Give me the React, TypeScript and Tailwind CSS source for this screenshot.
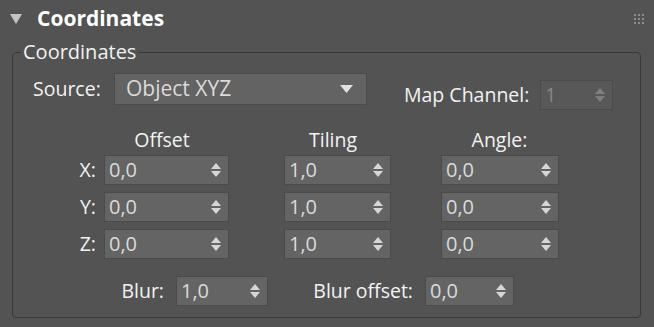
import React from 'react'

function Arrows({ dim }: { dim?: boolean }) {
  return (
    <svg width="10" height="14" viewBox="0 0 10 14" className="shrink-0">
      <polygon points="0,6 5,0 10,6" fill={dim ? '#7e7e7e' : '#d6d6d6'} />
      <polygon points="0,8 10,8 5,14" fill={dim ? '#7e7e7e' : '#d6d6d6'} />
    </svg>
  )
}

function Spinner({ value, className = '', dim }: { value: string; className?: string; dim?: boolean }) {
  return (
    <div
      className={`h-[30px] flex items-center justify-between pl-[4px] pr-[7px] border border-[#4b4b4b] text-[20px] ${
        dim ? 'bg-[#585858] text-[#878787]' : 'bg-[#646464] text-[#dadada]'
      } ${className}`}
    >
      <span className="leading-none">{value}</span>
      <Arrows dim={dim} />
    </div>
  )
}

const rows = [
  { axis: 'X:', offset: '0,0', tiling: '1,0', angle: '0,0' },
  { axis: 'Y:', offset: '0,0', tiling: '1,0', angle: '0,0' },
  { axis: 'Z:', offset: '0,0', tiling: '1,0', angle: '0,0' },
]

export default function App() {
  return (
    <div className="w-[654px] h-[327px] bg-[#535353] overflow-hidden text-[#f2f2f2] font-['Open_Sans',sans-serif] text-[19.5px]">
      {/* rollout header */}
      <div className="h-[38px] flex items-center relative">
        <svg width="12" height="10" viewBox="0 0 12 10" className="ml-[10px]">
          <polygon points="0,0 12,0 6,10" fill="#c4c4c4" />
        </svg>
        <span className="ml-[15px] font-bold text-[21px] text-white">Coordinates</span>
        <div className="absolute right-[10px] top-[14px] grid grid-cols-3 gap-[2px]">
          {Array.from({ length: 9 }).map((_, i) => (
            <div key={i} className="w-[2px] h-[2px] bg-[#8c8c8c]" />
          ))}
        </div>
      </div>

      <fieldset className="mt-[4px] ml-[12px] w-[629px] border border-[#393939] rounded-[4px] pb-[11px]">
        <legend className="ml-[8px] px-[2px] text-[20px] leading-[20px]">Coordinates</legend>

        <div className="mt-[11px] flex items-start pl-[20px]">
          <span className="w-[81px] h-[32px] leading-[32px]">Source:</span>
          <div className="w-[253px] h-[32px] flex items-center justify-between pl-[11px] pr-[13px] bg-[#636363] border border-[#4b4b4b] text-[#dadada] text-[21px]">
            <span>Object XYZ</span>
            <svg width="13" height="8" viewBox="0 0 13 8">
              <polygon points="0,0 13,0 6.5,8" fill="#e2e2e2" />
            </svg>
          </div>
          <div className="ml-[37px] mt-[7px] flex items-center">
            <span className="w-[128px] h-[30px] leading-[30px] whitespace-nowrap">Map Channel:</span>
            <Spinner value="1" dim className="ml-[8px] w-[73px]" />
          </div>
        </div>

        <div className="mt-[18px] flex h-[24px] leading-[24px]">
          <div className="w-[91px]" />
          <div className="w-[125px] pr-[9px] text-center">Offset</div>
          <div className="ml-[55px] w-[107px] pr-[9px] text-center">Tiling</div>
          <div className="ml-[50px] w-[118px] pr-[1px] text-center">Angle:</div>
        </div>

        <div className="mt-[3px] flex flex-col gap-[7px]">
          {rows.map((r) => (
            <div key={r.axis} className="flex items-center">
              <span className="w-[83px] text-right">{r.axis}</span>
              <Spinner value={r.offset} className="ml-[8px] w-[125px]" />
              <Spinner value={r.tiling} className="ml-[55px] w-[107px]" />
              <Spinner value={r.angle} className="ml-[50px] w-[118px]" />
            </div>
          ))}
        </div>

        <div className="mt-[17px] flex items-center">
          <span className="w-[151px] text-right">Blur:</span>
          <Spinner value="1,0" className="ml-[12px] w-[92px]" />
          <span className="ml-[44px] w-[101px] text-right whitespace-nowrap">Blur offset:</span>
          <Spinner value="0,0" className="ml-[12px] w-[89px]" />
        </div>
      </fieldset>
    </div>
  )
}
